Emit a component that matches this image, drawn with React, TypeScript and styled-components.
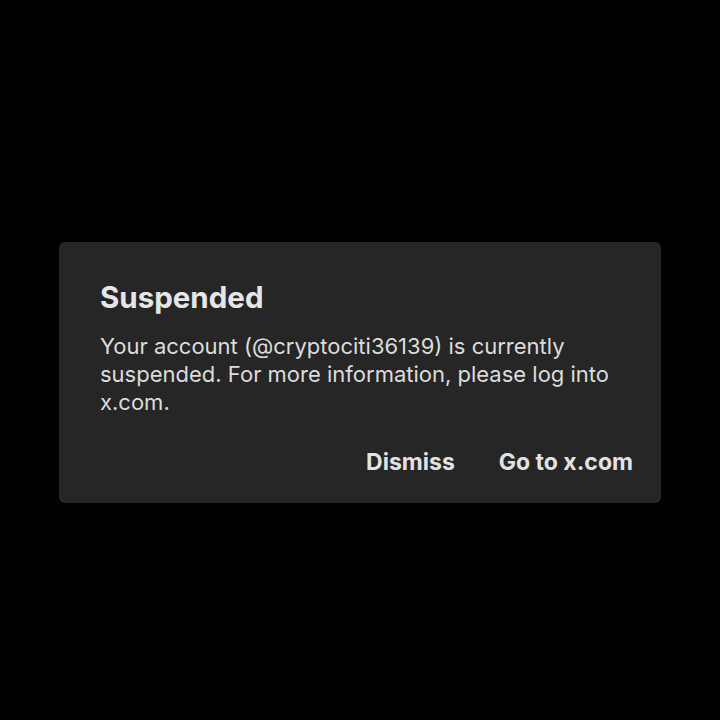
import React from "react";
import styled, { createGlobalStyle } from "styled-components";

const Global = createGlobalStyle`
  html, body { margin: 0; padding: 0; background: #000; }
  #root { min-height: 720px; }
`;

const Screen = styled.div`
  width: 720px;
  height: 720px;
  background: #000;
  display: flex;
  align-items: center;
  justify-content: center;
  font-family: Inter, "Liberation Sans", sans-serif;
`;

const Card = styled.div`
  box-sizing: border-box;
  width: 602px;
  height: 261px;
  margin-top: 25px;
  background: #262626;
  border-radius: 6px;
  padding: 36px 28px 0 41px;
  display: flex;
  flex-direction: column;
`;

const Title = styled.h2`
  margin: 0;
  font-size: 29.5px;
  font-weight: 700;
  line-height: 38px;
  color: #e6e6e6;
`;

const Body = styled.p`
  margin: 16px 0 0;
  font-size: 22px;
  line-height: 28px;
  color: #dcdcdc;
  width: 530px;
`;

const Actions = styled.div`
  display: flex;
  justify-content: flex-end;
  gap: 44px;
  margin-top: 32px;
`;

const Action = styled.button`
  background: none;
  border: none;
  padding: 0;
  font-family: inherit;
  font-size: 23px;
  font-weight: 700;
  color: #e2e2e2;
  line-height: 28px;
  cursor: pointer;
`;

export default function App() {
  return (
    <>
      <Global />
      <Screen>
        <Card>
          <Title>Suspended</Title>
          <Body>
            Your account (@cryptociti36139) is currently suspended. For more
            information, please log into x.com.
          </Body>
          <Actions>
            <Action>Dismiss</Action>
            <Action>Go to x.com</Action>
          </Actions>
        </Card>
      </Screen>
    </>
  );
}
